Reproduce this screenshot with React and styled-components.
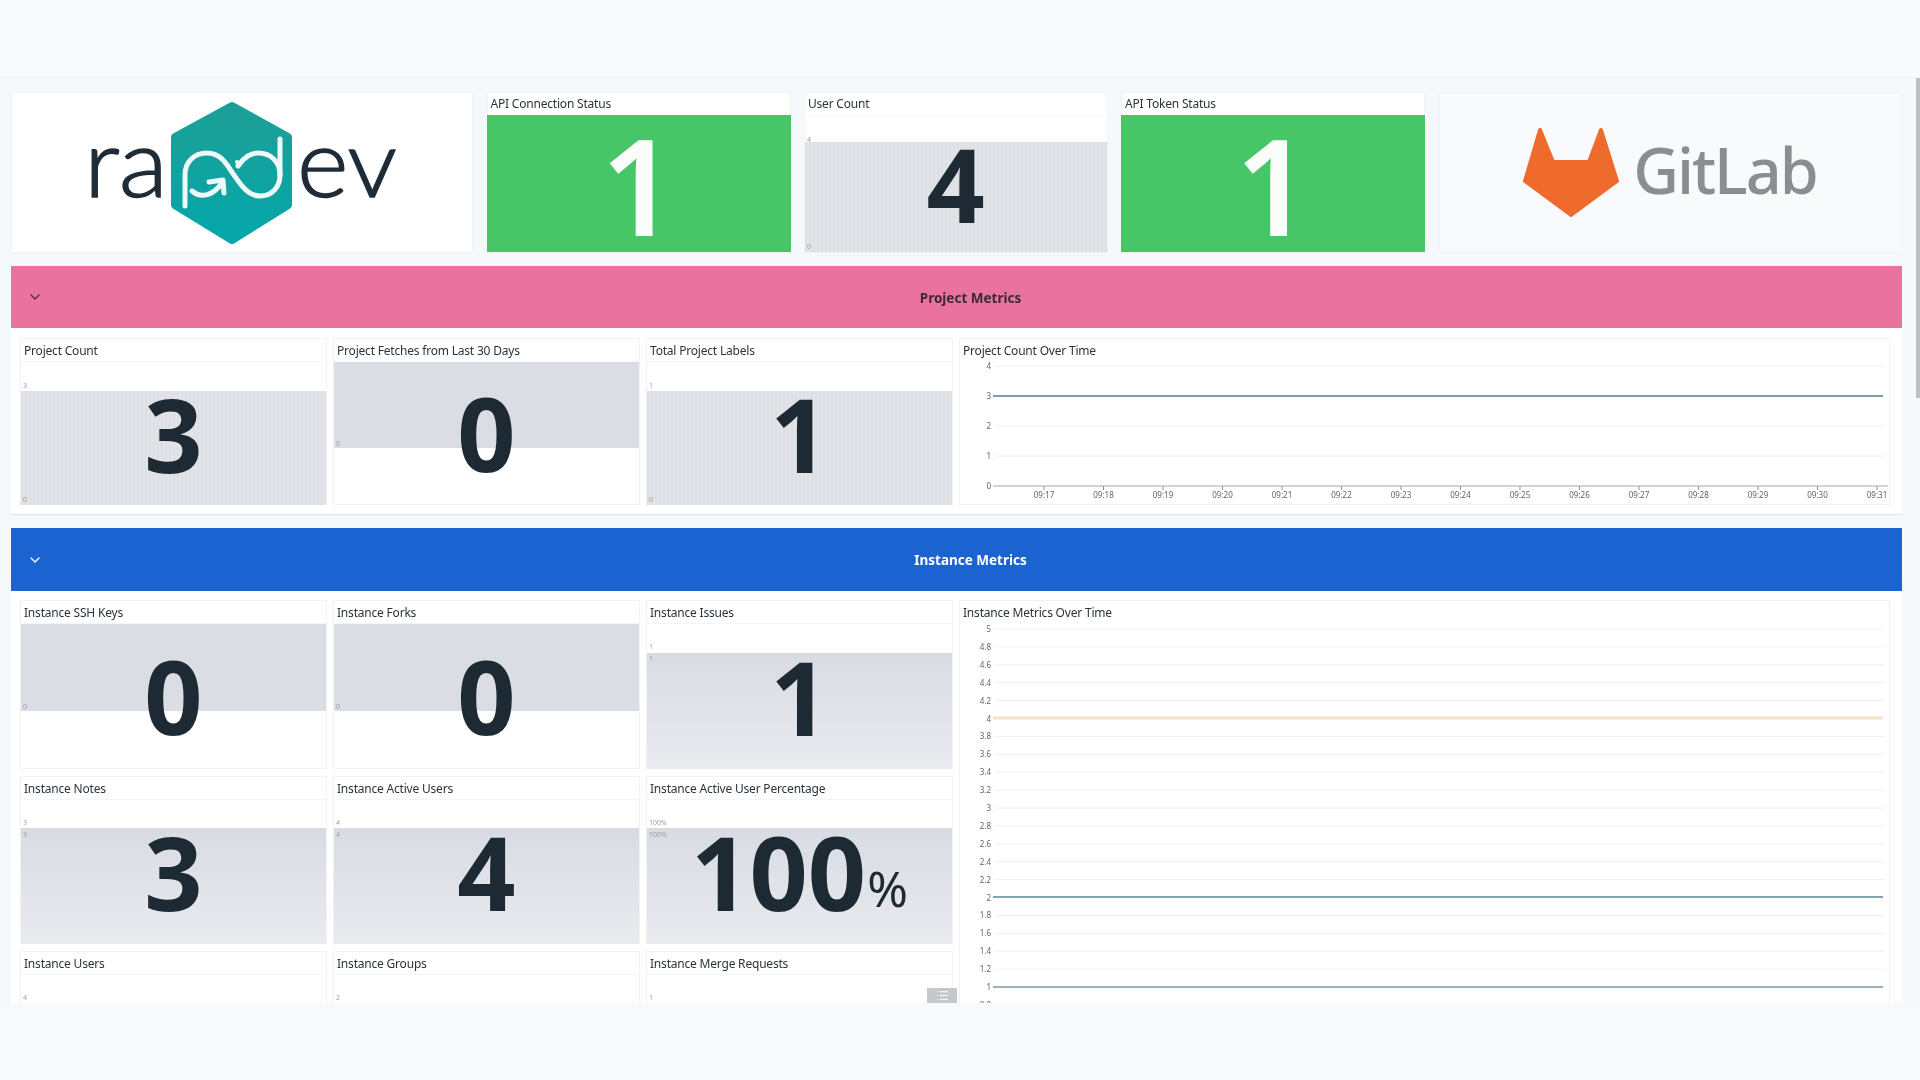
import React from "react";
import styled, { createGlobalStyle, css } from "styled-components";
import { ChevronDown, List } from "lucide-react";

const GlobalStyle = createGlobalStyle`
  html, body {
    margin: 0;
    height: 100%;
    background: #f7f9fb;
    font-family: "Noto Sans", "Open Sans", sans-serif;
    color: #2a343d;
  }
  * { box-sizing: border-box; }
`;

const Page = styled.div`
  height: 1080px;
  display: flex;
  flex-direction: column;
  overflow: hidden;
  position: relative;
`;

const TopBar = styled.div`
  height: 78px;
  flex: none;
  background: #f8fafc;
  border-bottom: 1px solid #f0f3f5;
`;

/* the source is a soft video frame, hence the slight blur */
const Main = styled.main`
  height: 925px;
  flex: none;
  overflow: hidden;
  padding: 14px 18px 0 11px;
  background: #f6f9fb;
  filter: blur(0.45px);
`;

const ScrollThumb = styled.div`
  position: absolute;
  top: 78px;
  right: 0;
  width: 4px;
  height: 320px;
  background: #b9c0c8;
`;

const LogoPanel = styled.div`
  background: ${(p) => p.$bg};
  border: 1px solid #f0f3f5;
  display: flex;
  align-items: center;
  justify-content: center;
  gap: 14px;
`;

const GitLabWord = styled.span`
  font-size: 63px;
  font-weight: 500;
  line-height: 1;
  color: #8c8d92;
  letter-spacing: -2px;
  position: relative;
  top: -3px;
`;

const Band = styled.div`
  height: ${(p) => p.$height}px;
  background: ${(p) => p.$bg};
  color: ${(p) => p.$color};
  display: flex;
  align-items: center;
  justify-content: center;
  position: relative;
  padding: 1px 0 0 28px;
  font-size: 13.5px;
  font-weight: 700;
`;

const Chevron = styled(ChevronDown)`
  position: absolute;
  left: 16px;
  top: 50%;
  margin-top: -8px;
  width: 16px;
  height: 16px;
  color: ${(p) => p.$color};
`;

const Section = styled.section`
  background: #fff;
  padding: ${(p) => p.$top}px 12px 9px 9px;
  border-bottom: 1px solid #dfe2e6;
  margin-bottom: 13px;
`;

const Grid = styled.div`
  display: grid;
  grid-template-columns: 307px 307px 307px 931px;
  grid-template-rows: ${(p) => p.$rows};
  gap: 6.5px 6px;
`;

const Card = styled.div`
  background: #fff;
  border: 1px solid #f0f2f4;
  position: relative;
  display: flex;
  flex-direction: column;
  ${(p) =>
    p.$span &&
    css`
      grid-column: 4;
      grid-row: 1 / span ${p.$span};
    `}
`;

const Title = styled.div`
  height: 22px;
  flex: none;
  padding-left: 3px;
  font-size: 12px;
  line-height: 24px;
  color: #2a343d;
  white-space: nowrap;
  letter-spacing: -0.2px;
`;

const HeaderRow = styled.div`
  display: grid;
  grid-template-columns: 462px 304px 303.5px 304px 463px;
  gap: 13.5px;
  height: 160px;
  margin-bottom: 14px;
  ${Title} {
    line-height: 22px;
  }
`;

const Body = styled.div`
  flex: 1;
  position: relative;
  ${(p) =>
    p.$flush
      ? css`
          margin: 0 -1px -1px;
        `
      : css`
          border-top: 1px solid #f4f5f7;
        `}
`;

const fills = {
  stripe: css`
    background: repeating-linear-gradient(90deg, #dcdfe4 0 2px, #e2e4e8 2px 4px);
  `,
  fade: css`
    background: linear-gradient(#d8dbe2, #e9ebef);
  `,
  flat: css`
    background: #dadde3;
  `,
  green: css`
    background: #46c667;
  `,
};

const Fill = styled.div`
  margin-top: ${(p) => p.$top}px;
  height: ${(p) => p.$height}px;
  ${(p) => fills[p.$kind]}
`;

const Tick = styled.span`
  position: absolute;
  left: 2px;
  top: ${(p) => p.$y}px;
  font-size: 7px;
  line-height: 8px;
  color: #9aa1a9;
`;

const Value = styled.div`
  position: absolute;
  inset: 0;
  display: flex;
  align-items: center;
  justify-content: center;
  font-size: ${(p) => p.$size}px;
  font-weight: ${(p) => p.$weight};
  line-height: 1;
  color: ${(p) => p.$color};
`;

const Unit = styled.span`
  font-size: 49px;
  font-weight: 400;
  align-self: flex-end;
  margin: 0 0 31px 1px;
  line-height: 1;
`;

const ListBadge = styled.div`
  position: absolute;
  right: -5px;
  top: 36px;
  width: 30px;
  height: 16px;
  background: #c5c8ce;
  color: #fff;
  display: flex;
  align-items: center;
  justify-content: center;
`;

const ChartSvg = styled.svg`
  display: block;
  font-family: "Noto Sans", sans-serif;
  fill: #5c656d;
`;

const Stat = ({ title, value, unit, top = 0, height = 0, kind = "stripe", ticks = [], size = 102, weight = 700, color = "#1e2a33", children }) => (
  <Card>
    <Title>{title}</Title>
    <Body $flush={kind === "green"}>
      <Fill $top={top} $height={height} $kind={kind} />
      {ticks.map(([y, label], i) => (
        <Tick key={i} $y={y}>{label}</Tick>
      ))}
      {value !== undefined && (
        <Value $size={size} $weight={weight} $color={color}>
          {value}
          {unit && <Unit>{unit}</Unit>}
        </Value>
      )}
    </Body>
    {children}
  </Card>
);

const RapdevLogo = () => (
  <svg width="460" height="158" viewBox="12 93 460 158">
    <defs>
      <linearGradient id="hex" x1="0" y1="0" x2="0" y2="1">
        <stop offset="0" stopColor="#1d9f97" />
        <stop offset="1" stopColor="#04a6a9" />
      </linearGradient>
    </defs>
    <path
      d="M232 105 L288 136 L288 204 L232 239 L175 204 L175 136 Z"
      fill="url(#hex)"
      stroke="url(#hex)"
      strokeWidth="8"
      strokeLinejoin="round"
    />
    <g fill="#1f2c38" stroke="#1f2c38" strokeWidth="1.4" fontFamily="Lato, 'Noto Sans', sans-serif" fontWeight="300" fontSize="94">
      <text x="84" y="196" textLength="84" lengthAdjust="spacingAndGlyphs">ra</text>
      <text x="297" y="196" textLength="100" lengthAdjust="spacingAndGlyphs">ev</text>
    </g>
    <g fill="none" stroke="#fff" strokeWidth="5" strokeLinecap="round" strokeLinejoin="round" opacity="0.93">
      <path d="M185 205 L185 174 C185 160 195 152 207 152 C222 152 228 166 234 174 C241 184 248 195 260 195 C272 195 280 186 280 174 L280 138" />
      <path d="M280 174 C280 160 270 152 258 152 C248 152 242 159 238 165" />
      <path d="M192 190 C200 197 212 196 222 182" />
      <path d="M209 181 L223 179 L224 192" />
    </g>
    <circle cx="237" cy="161" r="2" fill="#fff" />
  </svg>
);

const FoxMark = () => (
  <svg width="96" height="89" viewBox="1524 127 96 89">
    <path
      d="M1541 129 L1554 161 L1590 161 L1602 129 L1618 180 L1572 214 L1526 180 Z"
      fill="#ee6b2d"
      stroke="#ee6b2d"
      strokeWidth="4"
      strokeLinejoin="round"
    />
  </svg>
);

// one flat series per value, axis runs along the left of the plot
const LineChart = ({ height, top, ticks, lines, xLabels }) => (
  <ChartSvg width="929" height={height} viewBox={`960 ${top} 929 ${height}`}>
    {ticks.map(([y, label]) => (
      <g key={label}>
        <line x1="995" x2="1884" y1={y} y2={y} stroke="#eef0f2" />
        <text x="991" y={y + 3} fontSize="8" textAnchor="end">{label}</text>
      </g>
    ))}
    {lines.map(([y, color, w]) => (
      <line key={y} x1="993" x2="1883" y1={y} y2={y} stroke={color} strokeWidth={w} />
    ))}
    {xLabels &&
      xLabels.map((label, i) => {
        const x = 1044 + i * 59.5;
        return (
          <g key={label}>
            <line x1={x} x2={x} y1="486" y2="490" stroke="#8b9298" />
            <text x={x} y="498" fontSize="8" textAnchor="middle">{label}</text>
          </g>
        );
      })}
    {xLabels && <line x1="993" x2="1888" y1="486" y2="486" stroke="#a7adb3" />}
  </ChartSvg>
);

const projectTicks = [[366, "4"], [396, "3"], [426, "2"], [456, "1"], [486, "0"]];
const instanceTicks = Array.from({ length: 22 }, (_, i) => {
  const v = 5 - i * 0.2;
  return [629 + i * 17.9, String(Math.round(v * 10) / 10)];
});
const times = Array.from({ length: 15 }, (_, i) => `09:${17 + i}`);

export default function App() {
  return (
    <Page>
      <GlobalStyle />
      <TopBar />
      <Main>
        <HeaderRow>
          <LogoPanel $bg="#fff"><RapdevLogo /></LogoPanel>
          <Stat title="API Connection Status" value="1" height={137} kind="green" size={133} weight={600} color="#fbfdfb" />
          <Stat title="User Count" value="4" top={26} height={110} ticks={[[20, "4"], [127, "0"]]} />
          <Stat title="API Token Status" value="1" height={137} kind="green" size={133} weight={600} color="#fbfdfb" />
          <LogoPanel $bg="#f8fafb">
            <FoxMark />
            <GitLabWord>GitLab</GitLabWord>
          </LogoPanel>
        </HeaderRow>

        <Band $height={62} $bg="#e9739d" $color="#3b2a35">
          <Chevron $color="#5b2c40" />
          Project Metrics
        </Band>
        <Section $top={10}>
          <Grid $rows="167px">
            <Stat title="Project Count" value="3" top={29} height={114} ticks={[[20, "3"], [134, "0"]]} />
            <Stat title="Project Fetches from Last 30 Days" value="0" height={86} kind="flat" ticks={[[78, "0"]]} />
            <Stat title="Total Project Labels" value="1" top={29} height={114} ticks={[[20, "1"], [134, "0"]]} />
            <Card>
              <Title>Project Count Over Time</Title>
              <LineChart height={143} top={361} ticks={projectTicks} lines={[[396, "#7c9dac", 2]]} xLabels={times} />
            </Card>
          </Grid>
        </Section>

        <Band $height={63} $bg="#1c63d2" $color="#fff">
          <Chevron $color="#fff" />
          Instance Metrics
        </Band>
        <Section $top={9}>
          <Grid $rows="169px 168.5px 100px">
            <Stat title="Instance SSH Keys" value="0" height={87} kind="flat" ticks={[[79, "0"]]} />
            <Stat title="Instance Forks" value="0" height={87} kind="flat" ticks={[[79, "0"]]} />
            <Stat title="Instance Issues" value="1" top={29} height={116} kind="fade" ticks={[[19, "1"], [31, "1"]]} />
            <Card $span={3}>
              <Title>Instance Metrics Over Time</Title>
              <LineChart
                height={420}
                top={623}
                ticks={instanceTicks}
                lines={[[718, "#f3e3c8", 3], [897, "#7fa6ae", 2], [987, "#9eb0bd", 2]]}
              />
            </Card>
            <Stat title="Instance Notes" value="3" top={28} height={116} kind="fade" ticks={[[19, "3"], [31, "3"]]} />
            <Stat title="Instance Active Users" value="4" top={28} height={116} kind="fade" ticks={[[19, "4"], [31, "4"]]} />
            <Stat title="Instance Active User Percentage" value="100" unit="%" top={28} height={116} kind="fade" ticks={[[19, "100%"], [31, "100%"]]} />
            <Stat title="Instance Users" ticks={[[19, "4"]]} />
            <Stat title="Instance Groups" ticks={[[19, "2"]]} />
            <Stat title="Instance Merge Requests" ticks={[[19, "1"]]}>
              <ListBadge><List size={13} /></ListBadge>
            </Stat>
          </Grid>
        </Section>
      </Main>
      <ScrollThumb />
    </Page>
  );
}
